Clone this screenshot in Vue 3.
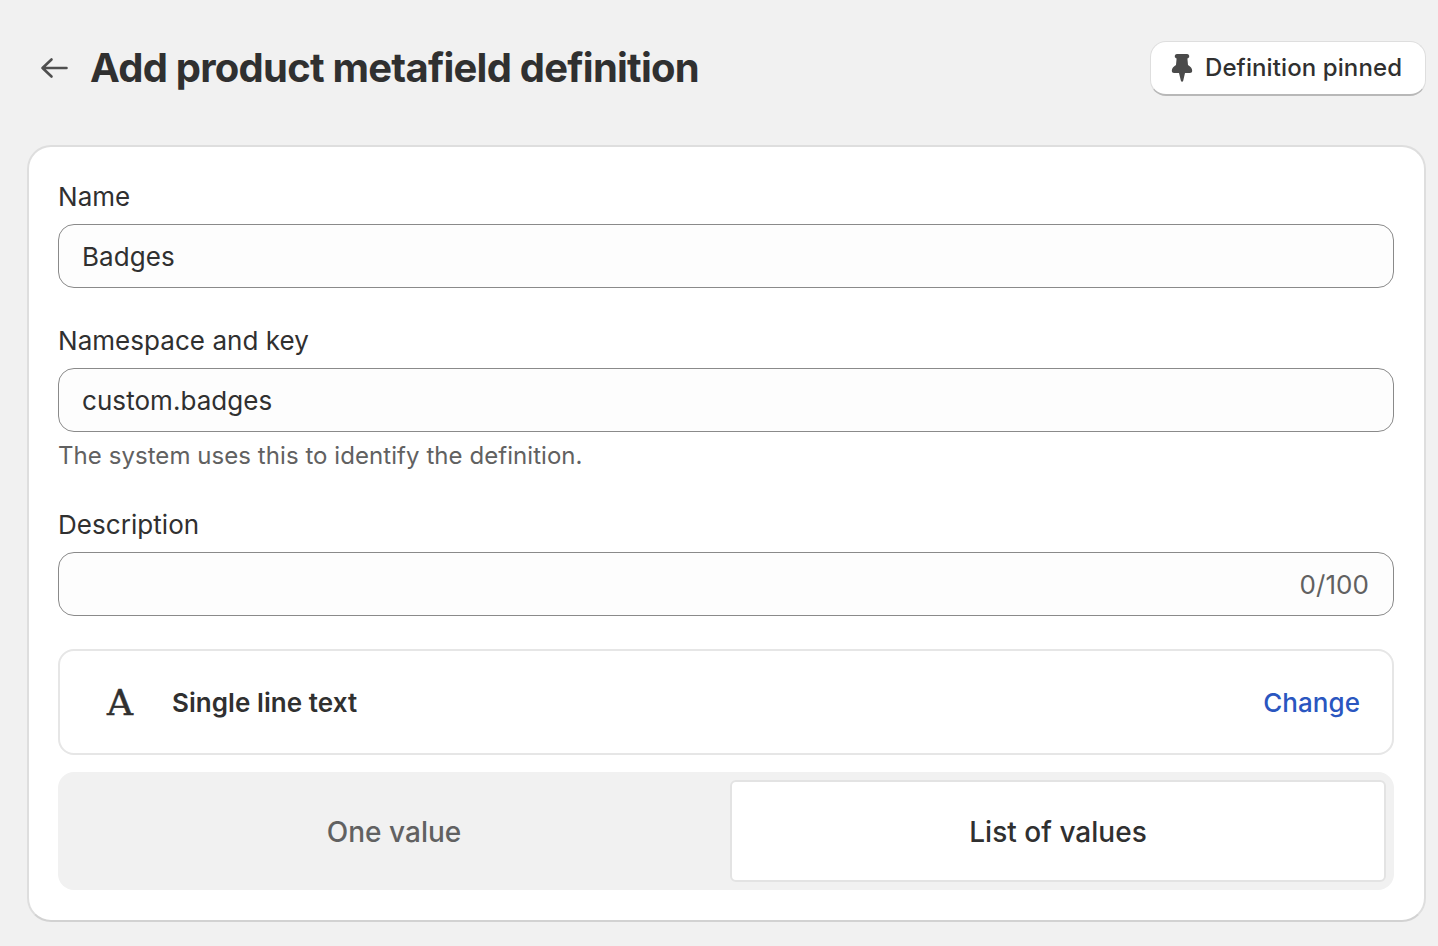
<script setup>
const fields = [
  { label: 'Name', value: 'Badges' },
  { label: 'Namespace and key', value: 'custom.badges', help: 'The system uses this to identify the definition.' },
  { label: 'Description', value: '', counter: '0/100' },
]
</script>

<template>
  <div class="page">
    <header class="header">
      <div class="heading">
        <svg class="back" width="28" height="22" viewBox="0 0 28 22" fill="none" aria-hidden="true">
          <path d="M26.5 11H2.5M11.5 2.5 2.5 11l9 8.5" stroke="#4f4f4f" stroke-width="2.6" stroke-linecap="round" stroke-linejoin="round" />
        </svg>
        <h1 class="title">Add product metafield definition</h1>
      </div>
      <button class="pin-button" type="button">
        <svg width="22" height="30" viewBox="0 0 22 30" aria-hidden="true">
          <path fill="#4a4a4a" d="M6 1h10a2.200 2.200 0 0 1 1 4.200l-.6.3L17 12c2.500 1.300 4.200 3.500 4.200 5.700 0 1.300-1 2.300-2.200 2.300H14l-1.800 7.800c-.3 1.300-2 1.300-2.300 0L8 20H3C1.800 20 .8 19 .8 17.700c0-2.200 1.700-4.400 4.200-5.700l.6-6.500-.6-.3A2.200 2.200 0 0 1 6 1Z" />
        </svg>
        <span>Definition pinned</span>
      </button>
    </header>

    <main class="card">
      <div v-for="field in fields" :key="field.label" class="field">
        <label class="label">{{ field.label }}</label>
        <div class="input">
          <span>{{ field.value }}</span>
          <span v-if="field.counter" class="counter">{{ field.counter }}</span>
        </div>
        <p v-if="field.help" class="help">{{ field.help }}</p>
      </div>

      <section class="type-row">
        <div class="type-name">
          <span class="type-icon">A</span>
          <strong>Single line text</strong>
        </div>
        <a class="change" href="#">Change</a>
      </section>

      <div class="toggle">
        <div class="option">One value</div>
        <div class="option selected">List of values</div>
      </div>
    </main>
  </div>
</template>

<style>
html, body { margin: 0; background: #f1f1f1; }
</style>

<style scoped>
.page {
  box-sizing: border-box;
  height: 946px;
  overflow: hidden;
  padding: 41px 12px 0 27px;
  font-family: Inter, "Liberation Sans", sans-serif;
  color: #303030;
}
.header { display: flex; justify-content: space-between; align-items: center; height: 54px; margin-bottom: 50px; }
.heading { display: flex; align-items: center; gap: 22px; padding-left: 13px; }
.back { display: block; }
.title { margin: 0; font-size: 40px; line-height: 54px; font-weight: 700; letter-spacing: -0.76px; color: #303030; }
.pin-button {
  box-sizing: border-box;
  width: 276px; height: 55px;
  display: flex; align-items: center; gap: 12px;
  padding: 0 0 0 20px;
  border: 1px solid #dedede;
  border-bottom: 2px solid #b8b8b8;
  border-radius: 16px;
  background: #fff;
  font: 500 24px/32px Inter, "Liberation Sans", sans-serif;
  letter-spacing: 0.1px;
  color: #303030;
}
.card {
  box-sizing: border-box;
  height: 777px;
  padding: 34px 30px 30px 29px;
  background: #fff;
  border: 2px solid #dedede;
  border-bottom-color: #d2d2d2;
  border-radius: 24px;
  display: flex; flex-direction: column;
}
.field { margin-bottom: 37px; }
.field:nth-child(3) { margin-bottom: 33px; }
.label { display: block; font-size: 26px; line-height: 32px; margin-bottom: 11px; letter-spacing: 0.05px; }
.input {
  box-sizing: border-box;
  height: 64px;
  display: flex; align-items: center; justify-content: space-between;
  padding: 0 24px 0 23px;
  border: 1px solid #8a8a8a;
  border-radius: 16px;
  background: #fdfdfd;
  font-size: 26px;
  letter-spacing: 0.06px;
}
.counter { color: #616161; margin-left: auto; }
.help { margin: 8px 0 0; font-size: 24px; line-height: 32px; color: #616161; letter-spacing: 0.06px; }
.type-row {
  box-sizing: border-box;
  height: 106px;
  margin-bottom: 17px;
  display: flex; align-items: center; justify-content: space-between;
  padding: 1px 32px 0 46px;
  border: 2px solid #e6e6e6;
  border-radius: 16px;
}
.type-name { display: flex; align-items: center; gap: 38px; }
.type-name strong { font-size: 26px; font-weight: 600; line-height: 32px; letter-spacing: 0.06px; }
.type-icon {
  width: 28px; text-align: center;
  font: 400 36px/36px "DejaVu Serif", "Liberation Serif", serif;
  -webkit-text-stroke: 0.5px #303030;
}
.change { color: #2a56c0; font-size: 26px; font-weight: 500; letter-spacing: 0.05px; text-decoration: none; }
.toggle {
  box-sizing: border-box;
  height: 118px;
  padding: 8px;
  display: grid; grid-template-columns: 1fr 1fr; gap: 8px;
  background: #f1f1f1;
  border-radius: 16px;
}
.option { display: flex; align-items: center; justify-content: center; padding-top: 2px; font-size: 28px; font-weight: 500; letter-spacing: 0.03px; color: #616161; }
.selected {
  background: #fff; color: #303030;
  border: 2px solid #e3e3e3;
  border-radius: 6px;
}
</style>
